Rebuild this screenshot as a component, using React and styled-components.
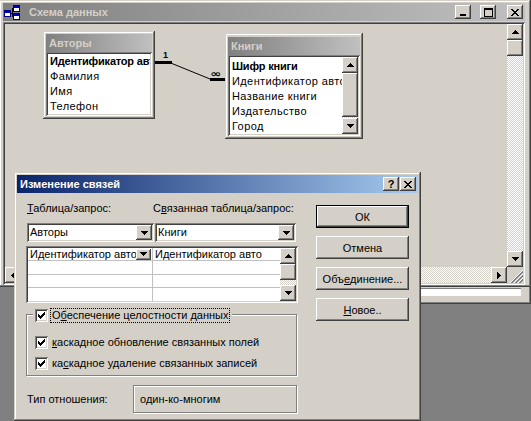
import React from "react";
import styled, { createGlobalStyle, css } from "styled-components";

const FACE = "#d4d0c8";

const GlobalStyle = createGlobalStyle`
  html, body { margin: 0; padding: 0; background: #808080; }
  body {
    font-family: "Liberation Sans", Arial, sans-serif;
    font-size: 11px;
    color: #000;
  }
  * { box-sizing: border-box; }
`;

const frameBevel = css`
  box-shadow: inset -1px -1px #404040, inset 1px 1px ${FACE},
    inset -2px -2px #808080, inset 2px 2px #fff;
`;
const buttonBevel = css`
  box-shadow: inset -1px -1px #404040, inset 1px 1px #fff,
    inset -2px -2px #808080, inset 2px 2px ${FACE};
`;
const sunkenBevel = css`
  box-shadow: inset 1px 1px #808080, inset -1px -1px #fff,
    inset 2px 2px #404040, inset -2px -2px ${FACE};
`;
const etched = css`
  border: 1px solid #808080;
  box-shadow: inset 1px 1px #fff, 1px 1px #fff;
`;
const dither = css`
  background-color: ${FACE};
  background-image: conic-gradient(#fff 25%, transparent 0 50%, #fff 0 75%, transparent 0);
  background-size: 2px 2px;
`;

const Desktop = styled.div`
  position: relative;
  width: 531px;
  height: 421px;
  overflow: hidden;
  background: #808080;
`;

// windows on the desktop are placed by their screen position
const Window = styled.div`
  position: absolute;
  left: ${(p) => p.$x}px;
  top: ${(p) => p.$y}px;
  width: ${(p) => p.$w}px;
  height: ${(p) => p.$h}px;
  padding: ${(p) => p.$pad || "3px"};
  background: ${FACE};
  ${frameBevel};
  display: flex;
  flex-direction: column;
`;

const StatusField = styled.div`
  height: 8px;
  background: #fff;
  border-top: 1px solid #808080;
  border-left: 1px solid #808080;
`;

const TitleBar = styled.div`
  flex: none;
  height: 18px;
  display: flex;
  align-items: center;
  gap: ${(p) => p.$gap || 0}px;
  padding: 0 2px 0 ${(p) => p.$indent ?? 3}px;
  background: ${(p) =>
    p.$active
      ? "linear-gradient(90deg, #0a246a, #a6caf0)"
      : "linear-gradient(90deg, #808080, #c0c0c0)"};
  color: ${(p) => (p.$active ? "#fff" : FACE)};
  font-weight: bold;
  white-space: nowrap;
`;

const TitleText = styled.span`
  flex: 1;
  line-height: 18px;
  overflow: hidden;
`;

const CaptionButton = styled.div`
  flex: none;
  width: 16px;
  height: 14px;
  margin-left: ${(p) => p.$space || 0}px;
  background: ${FACE};
  ${buttonBevel};
  display: flex;
  align-items: center;
  justify-content: center;
  color: #000;
  font-weight: bold;
  font-size: 11px;
  line-height: 14px;
`;

const Pixels = styled.svg`
  display: block;
  shape-rendering: crispEdges;
`;

const ClientArea = styled.div`
  flex: 1;
  min-height: 0;
  margin-top: 1px;
  padding: 2px;
  ${sunkenBevel};
  display: grid;
  grid-template-columns: 1fr 16px;
  grid-template-rows: 1fr 16px;
`;

const Canvas = styled.div`
  position: relative;
  overflow: hidden;
  background: ${FACE};
`;

const RelationLayer = styled.svg`
  position: absolute;
  left: 0;
  top: 0;
`;

const TableBox = styled.div`
  position: absolute;
  left: ${(p) => p.$x}px;
  top: ${(p) => p.$y}px;
  width: ${(p) => p.$w}px;
  padding: ${(p) => p.$pt || 3}px 3px 3px;
  background: ${FACE};
  ${frameBevel};
`;

const FieldList = styled.div`
  display: flex;
  padding: 2px;
  background: #fff;
  ${sunkenBevel};
`;

const FieldItems = styled.div`
  flex: 1;
  min-width: 0;
  padding-top: ${(p) => p.$pt || 0}px;
`;

const Field = styled.div`
  height: 15px;
  line-height: 15px;
  padding-left: 2px;
  white-space: nowrap;
  overflow: hidden;
  font-weight: ${(p) => (p.$key ? "bold" : "normal")};
  letter-spacing: ${(p) => (p.$key ? "-0.2px" : "0.4px")};
`;

const ScrollTrack = styled.div`
  display: flex;
  flex-direction: ${(p) => (p.$horizontal ? "row" : "column")};
  ${dither};
  ${(p) => (p.$horizontal ? "height: 16px;" : "width: 16px;")}
`;

const ScrollButton = styled.div`
  flex: none;
  width: 16px;
  height: 16px;
  background: ${FACE};
  ${buttonBevel};
  display: flex;
  align-items: center;
  justify-content: center;
`;

const ScrollThumb = styled.div`
  flex: none;
  width: ${(p) => (p.$horizontal ? p.$size : 16)}px;
  height: ${(p) => (p.$horizontal ? 16 : p.$size)}px;
  background: ${FACE};
  ${buttonBevel};
`;

const ScrollSpace = styled.div`
  flex: 1;
`;

const SizeGrip = styled.div`
  background: ${FACE};
`;

const DialogBody = styled.div`
  display: flex;
  gap: 18px;
  padding: 8px 9px 0;
`;

const LeftColumn = styled.div`
  width: 272px;
  display: flex;
  flex-direction: column;
`;

const ButtonColumn = styled.div`
  width: 93px;
  display: flex;
  flex-direction: column;
  gap: 8px;
  padding-top: 4px;
`;

const PairRow = styled.div`
  display: grid;
  grid-template-columns: ${(p) => p.$cols};
  column-gap: ${(p) => p.$gap || 0}px;
  margin: ${(p) => p.$mt || 0}px 0 0 1px;
`;

const FieldLabel = styled.div`
  height: 14px;
  line-height: 14px;
  white-space: nowrap;
`;

const Combo = styled.div`
  height: 19px;
  display: flex;
  padding: 2px;
  background: #fff;
  ${sunkenBevel};
`;

const ComboText = styled.span`
  flex: 1;
  min-width: 0;
  padding-left: 1px;
  line-height: 15px;
  white-space: nowrap;
  overflow: hidden;
`;

const DropButton = styled.div`
  flex: none;
  width: ${(p) => p.$w || 16}px;
  height: ${(p) => p.$h || 15}px;
  margin-right: ${(p) => p.$mr || 0}px;
  background: ${FACE};
  ${buttonBevel};
  display: flex;
  align-items: center;
  justify-content: center;
`;

const DataGrid = styled.div`
  margin-top: 4px;
  height: 57px;
  display: flex;
  padding: 2px;
  background: #fff;
  ${sunkenBevel};
`;

const GridTable = styled.div`
  flex: 1;
  display: grid;
  grid-template-columns: 125px 1fr;
  grid-template-rows: repeat(4, 1fr);
`;

const GridCell = styled.div`
  display: flex;
  align-items: center;
  min-width: 0;
  padding-left: 2px;
  border-bottom: ${(p) => (p.$last ? "none" : "1px solid #c0c0c0")};
  border-right: ${(p) => (p.$first ? "1px solid #c0c0c0" : "none")};
`;

const CellText = styled.span`
  flex: 1;
  min-width: 0;
  overflow: hidden;
  white-space: nowrap;
  line-height: 12px;
`;

const CellSpacer = styled.span`
  flex: none;
  width: 18px;
`;

const GroupBox = styled.div`
  margin-top: 11px;
  width: 271px;
  ${etched};
  padding: 0 0 1px 8px;
  display: flex;
  flex-direction: column;
`;

const GroupHead = styled.div`
  align-self: flex-start;
  height: 17px;
  margin: -8px 0 0 -2px;
  padding: 0 2px;
  display: flex;
  align-items: center;
  gap: 2px;
  background: ${FACE};
`;

const CheckList = styled.div`
  margin-top: 8px;
`;

const CheckRow = styled.div`
  height: 21px;
  display: flex;
  align-items: center;
  gap: 2px;
`;

const CheckBox = styled.div`
  flex: none;
  width: 13px;
  height: 13px;
  background: #fff;
  ${sunkenBevel};
  display: flex;
  align-items: center;
  justify-content: center;
`;

const CheckLabel = styled.span`
  padding: 0 1px;
  line-height: 13px;
  white-space: nowrap;
  border: 1px dotted ${(p) => (p.$focus ? "#000" : "transparent")};
`;

const TypeRow = styled.div`
  margin: 9px 0 0 1px;
  display: flex;
  align-items: center;
`;

const TypeLabel = styled.span`
  width: 106px;
`;

const TypeBox = styled.div`
  width: 164px;
  height: 28px;
  ${etched};
  display: flex;
  align-items: center;
  padding-left: 6px;
`;

const PushButton = styled.div`
  height: 23px;
  display: flex;
  align-items: center;
  justify-content: center;
  background: ${FACE};
  white-space: nowrap;
  ${(p) =>
    p.$default
      ? css`
          border: 1px solid #000;
          ${buttonBevel};
        `
      : buttonBevel}
`;

const ARROWS = {
  up: "M3 0h1v1H3z M2 1h3v1H2z M1 2h5v1H1z M0 3h7v1H0z",
  down: "M0 0h7v1H0z M1 1h5v1H1z M2 2h3v1H2z M3 3h1v1H3z",
  left: "M0 3h1v1H0z M1 2h1v3H1z M2 1h1v5H2z M3 0h1v7H3z",
  right: "M0 0h1v7H0z M1 1h1v5H1z M2 2h1v3H2z M3 3h1v1H3z",
};

const Arrow = ({ dir }) => {
  const side = dir === "left" || dir === "right";
  const w = side ? 4 : 7;
  const h = side ? 7 : 4;
  return (
    <Pixels width={w} height={h} viewBox={`0 0 ${w} ${h}`}>
      <path d={ARROWS[dir]} fill="#000" />
    </Pixels>
  );
};

const MinGlyph = () => (
  <Pixels width="8" height="7" viewBox="0 0 8 7">
    <path d="M1 5h6v2H1z" fill="#000" />
  </Pixels>
);

const MaxGlyph = () => (
  <Pixels width="9" height="9" viewBox="0 0 9 9">
    <path d="M0 0h9v2H0z M0 2h1v7H0z M8 2h1v7H8z M0 8h9v1H0z" fill="#000" />
  </Pixels>
);

const CloseGlyph = () => (
  <Pixels width="8" height="7" viewBox="0 0 8 7">
    <path
      d="M0 0h2v1H0z M6 0h2v1H6z M1 1h2v1H1z M5 1h2v1H5z M2 2h4v1H2z M3 3h2v1H3z M2 4h4v1H2z M1 5h2v1H1z M5 5h2v1H5z M0 6h2v1H0z M6 6h2v1H6z"
      fill="#000"
    />
  </Pixels>
);

const CheckGlyph = () => (
  <Pixels width="7" height="7" viewBox="0 0 7 7">
    <path
      d="M6 0h1v3H6z M5 1h1v3H5z M4 2h1v3H4z M3 3h1v3H3z M2 4h1v3H2z M1 3h1v3H1z M0 2h1v3H0z"
      fill="#000"
    />
  </Pixels>
);

const SchemaIcon = () => (
  <Pixels width="16" height="16" viewBox="0 0 16 16">
    <path d="M6 9h3 M8 4v9 M8 4h1 M8 12h1" stroke="#000" strokeWidth="1" fill="none" />
    <rect x="0.5" y="6.5" width="6" height="6" fill="#fff" stroke="#000080" />
    <rect x="1" y="7" width="5" height="2" fill="#0000c0" />
    <rect x="9.5" y="1.5" width="6" height="6" fill="#fff" stroke="#000080" />
    <rect x="10" y="2" width="5" height="2" fill="#0000c0" />
    <rect x="9.5" y="9.5" width="6" height="6" fill="#fff" stroke="#000080" />
    <rect x="10" y="10" width="5" height="2" fill="#0000c0" />
  </Pixels>
);

const GripGlyph = () => (
  <Pixels width="16" height="16" viewBox="0 0 16 16">
    {[3, 7, 11].map((o) => (
      <g key={o}>
        <line x1={o} y1="16" x2="16" y2={o} stroke="#fff" />
        <line x1={o + 1} y1="16" x2="16" y2={o + 1} stroke="#808080" />
        <line x1={o + 2} y1="16" x2="16" y2={o + 2} stroke="#808080" />
      </g>
    ))}
  </Pixels>
);

const VScroll = ({ thumb = 16 }) => (
  <ScrollTrack>
    <ScrollButton>
      <Arrow dir="up" />
    </ScrollButton>
    <ScrollThumb $size={thumb} />
    <ScrollSpace />
    <ScrollButton>
      <Arrow dir="down" />
    </ScrollButton>
  </ScrollTrack>
);

const HScroll = () => (
  <ScrollTrack $horizontal>
    <ScrollButton>
      <Arrow dir="left" />
    </ScrollButton>
    <ScrollThumb $horizontal $size={16} />
    <ScrollSpace />
    <ScrollButton>
      <Arrow dir="right" />
    </ScrollButton>
  </ScrollTrack>
);

const FieldTable = ({ title, fields, x, y, w, pt, scroll }) => (
  <TableBox $x={x} $y={y} $w={w} $pt={pt}>
    <TitleBar>
      <TitleText>{title}</TitleText>
    </TitleBar>
    <FieldList>
      <FieldItems $pt={scroll ? 2 : 0}>
        {fields.map((f, i) => (
          <Field key={f} $key={i === 0}>
            {f}
          </Field>
        ))}
      </FieldItems>
      {scroll && <VScroll thumb={44} />}
    </FieldList>
  </TableBox>
);

const SchemaWindow = () => (
  <Window $x={-1} $y={0} $w={532} $h={287} $pad="3px 6px 2px 4px">
    <TitleBar $indent={1} $gap={9}>
      <SchemaIcon />
      <TitleText>Схема данных</TitleText>
      <CaptionButton>
        <MinGlyph />
      </CaptionButton>
      <CaptionButton>
        <MaxGlyph />
      </CaptionButton>
      <CaptionButton $space={2}>
        <CloseGlyph />
      </CaptionButton>
    </TitleBar>
    <ClientArea>
      <Canvas>
        <RelationLayer width="502" height="243" viewBox="0 0 502 243">
          <rect x="150" y="37" width="17" height="3" fill="#000" />
          <text
            x="158"
            y="34"
            fontSize="9"
            fontWeight="bold"
            fontFamily="Liberation Sans, sans-serif"
          >
            1
          </text>
          <line x1="167" y1="39.5" x2="205" y2="55" stroke="#000" strokeWidth="1" />
          <rect x="205" y="54" width="15" height="3" fill="#000" />
          <text
            transform="translate(205 52.5) scale(1.15 0.8)"
            fontSize="12"
            fontWeight="bold"
            fontFamily="DejaVu Sans, sans-serif"
          >
            ∞
          </text>
        </RelationLayer>
        <FieldTable
          title="Авторы"
          x={38}
          y={7}
          w={112}
          fields={["Идентификатор автора", "Фамилия", "Имя", "Телефон"]}
        />
        <FieldTable
          title="Книги"
          x={220}
          y={9}
          w={138}
          pt={4}
          scroll
          fields={[
            "Шифр книги",
            "Идентификатор автора",
            "Название книги",
            "Издательство",
            "Город",
          ]}
        />
      </Canvas>
      <VScroll />
      <HScroll />
      <SizeGrip>
        <GripGlyph />
      </SizeGrip>
    </ClientArea>
  </Window>
);

const RelationDialog = () => (
  <Window $x={14} $y={172} $w={407} $h={249}>
    <TitleBar $active>
      <TitleText>Изменение связей</TitleText>
      <CaptionButton>?</CaptionButton>
      <CaptionButton $space={1}>
        <CloseGlyph />
      </CaptionButton>
    </TitleBar>
    <DialogBody>
      <LeftColumn>
        <PairRow $cols="126px 1fr">
          <FieldLabel>
            <u>Т</u>аблица/запрос:
          </FieldLabel>
          <FieldLabel>
            С<u>в</u>язанная таблица/запрос:
          </FieldLabel>
        </PairRow>
        <PairRow $cols="127px 141px" $gap={1} $mt={8}>
          <Combo>
            <ComboText>Авторы</ComboText>
            <DropButton>
              <Arrow dir="down" />
            </DropButton>
          </Combo>
          <Combo>
            <ComboText>Книги</ComboText>
            <DropButton>
              <Arrow dir="down" />
            </DropButton>
          </Combo>
        </PairRow>
        <DataGrid>
          <GridTable>
            <GridCell $first>
              <CellText>Идентификатор автора</CellText>
              <DropButton $w={15} $h={11} $mr={1}>
                <Arrow dir="down" />
              </DropButton>
            </GridCell>
            <GridCell>
              <CellText>Идентификатор автора</CellText>
              <CellSpacer />
            </GridCell>
            <GridCell $first />
            <GridCell />
            <GridCell $first />
            <GridCell />
            <GridCell $first $last />
            <GridCell $last />
          </GridTable>
          <VScroll />
        </DataGrid>
        <GroupBox>
          <GroupHead>
            <CheckBox>
              <CheckGlyph />
            </CheckBox>
            <CheckLabel $focus>
              О<u>б</u>еспечение целостности данных
            </CheckLabel>
          </GroupHead>
          <CheckList>
            <CheckRow>
              <CheckBox>
                <CheckGlyph />
              </CheckBox>
              <CheckLabel>
                <u>к</u>аскадное обновление связанных полей
              </CheckLabel>
            </CheckRow>
            <CheckRow>
              <CheckBox>
                <CheckGlyph />
              </CheckBox>
              <CheckLabel>
                ка<u>с</u>кадное удаление связанных записей
              </CheckLabel>
            </CheckRow>
          </CheckList>
        </GroupBox>
        <TypeRow>
          <TypeLabel>Тип отношения:</TypeLabel>
          <TypeBox>один-ко-многим</TypeBox>
        </TypeRow>
      </LeftColumn>
      <ButtonColumn>
        <PushButton $default>ОК</PushButton>
        <PushButton>Отмена</PushButton>
        <PushButton>
          Объ<u>е</u>динение...
        </PushButton>
        <PushButton>
          <u>Н</u>овое..
        </PushButton>
      </ButtonColumn>
    </DialogBody>
  </Window>
);

export default function App() {
  return (
    <>
      <GlobalStyle />
      <Desktop>
        <Window $x={16} $y={278} $w={515} $h={26} $pad="10px 10px 8px 3px">
          <StatusField />
        </Window>
        <SchemaWindow />
        <RelationDialog />
      </Desktop>
    </>
  );
}
